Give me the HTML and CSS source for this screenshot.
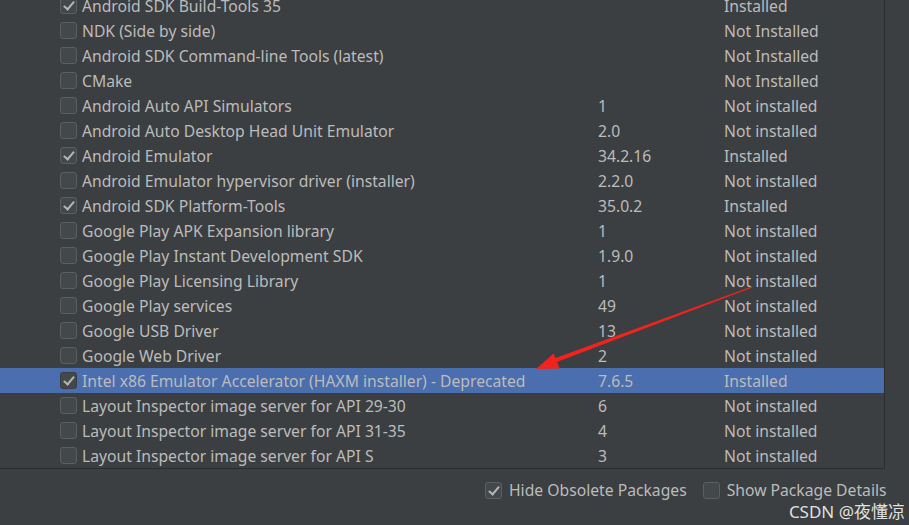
FILE: index.html
```html
<!DOCTYPE html>
<html lang="en">
<head>
    <meta charset="UTF-8">
    <title>SDK Tools</title>
    <link rel="stylesheet" href="styles.css">
</head>
<body>
    <main class="panel">
        <div class="table">
            <div class="row"><span class="name"><span class="box checked"></span>Android SDK Build-Tools 35</span><span class="ver"></span><span class="status">Installed</span></div>
            <div class="row"><span class="name"><span class="box"></span>NDK (Side by side)</span><span class="ver"></span><span class="status">Not Installed</span></div>
            <div class="row"><span class="name"><span class="box"></span>Android SDK Command-line Tools (latest)</span><span class="ver"></span><span class="status">Not Installed</span></div>
            <div class="row"><span class="name"><span class="box"></span>CMake</span><span class="ver"></span><span class="status">Not Installed</span></div>
            <div class="row"><span class="name"><span class="box"></span>Android Auto API Simulators</span><span class="ver">1</span><span class="status">Not installed</span></div>
            <div class="row"><span class="name"><span class="box"></span>Android Auto Desktop Head Unit Emulator</span><span class="ver">2.0</span><span class="status">Not installed</span></div>
            <div class="row"><span class="name"><span class="box checked"></span>Android Emulator</span><span class="ver">34.2.16</span><span class="status">Installed</span></div>
            <div class="row"><span class="name"><span class="box"></span>Android Emulator hypervisor driver (installer)</span><span class="ver">2.2.0</span><span class="status">Not installed</span></div>
            <div class="row"><span class="name"><span class="box checked"></span>Android SDK Platform-Tools</span><span class="ver">35.0.2</span><span class="status">Installed</span></div>
            <div class="row"><span class="name"><span class="box"></span>Google Play APK Expansion library</span><span class="ver">1</span><span class="status">Not installed</span></div>
            <div class="row"><span class="name"><span class="box"></span>Google Play Instant Development SDK</span><span class="ver">1.9.0</span><span class="status">Not installed</span></div>
            <div class="row"><span class="name"><span class="box"></span>Google Play Licensing Library</span><span class="ver">1</span><span class="status">Not installed</span></div>
            <div class="row"><span class="name"><span class="box"></span>Google Play services</span><span class="ver">49</span><span class="status">Not installed</span></div>
            <div class="row"><span class="name"><span class="box"></span>Google USB Driver</span><span class="ver">13</span><span class="status">Not installed</span></div>
            <div class="row"><span class="name"><span class="box"></span>Google Web Driver</span><span class="ver">2</span><span class="status">Not installed</span></div>
            <div class="row selected"><span class="name"><span class="box checked"></span>Intel x86 Emulator Accelerator (HAXM installer) - Deprecated</span><span class="ver">7.6.5</span><span class="status">Installed</span></div>
            <div class="row"><span class="name"><span class="box"></span>Layout Inspector image server for API 29-30</span><span class="ver">6</span><span class="status">Not installed</span></div>
            <div class="row"><span class="name"><span class="box"></span>Layout Inspector image server for API 31-35</span><span class="ver">4</span><span class="status">Not installed</span></div>
            <div class="row"><span class="name"><span class="box"></span>Layout Inspector image server for API S</span><span class="ver">3</span><span class="status">Not installed</span></div>
        </div>

        <div class="options">
            <label class="option"><span class="box checked"></span>Hide Obsolete Packages</label>
            <label class="option"><span class="box"></span>Show Package Details</label>
        </div>
    </main>

    <!-- red annotation arrow drawn over the screenshot -->
    <svg class="arrow" width="909" height="525" viewBox="0 0 909 525">
        <polygon points="752.3,287.6 751.7,286.4 552.8,358.9 554.2,363.1" fill="#f0231e"/>
        <polygon points="536,369 553.6,353.6 559.8,368.6" fill="#f0231e"/>
    </svg>

    <div class="watermark">CSDN @夜懂凉</div>
</body>
</html>
```

FILE: styles.css
```css
*{
    margin: 0;
    padding: 0;
    box-sizing: border-box;
}
body{
    width: 909px;
    height: 525px;
    overflow: hidden;
    background-color: #3c3f41;
    font-family: "Noto Sans", "Open Sans", sans-serif;
    font-size: 15.7px;
    color: #bbbbbb;
}
.panel{
    display: flex;
    flex-direction: column;
}
.table{
    width: 885px;
    margin-top: -7px;
    background-color: #3c3f41;
    border-right: 1px solid #2b2d2e;
    border-bottom: 1px solid #2b2d2e;
}
.row{
    height: 25px;
    display: grid;
    grid-template-columns: 598px 126px 1fr;
    align-items: center;
    white-space: nowrap;
}
.row.selected{
    background-color: #4b6eaf;
}
.name{
    display: flex;
    align-items: center;
    padding-left: 60px;
}
.box{
    width: 17px;
    height: 17px;
    margin-right: 5px;
    border: 1px solid #5c5f61;
    border-radius: 3px;
    background-color: #43494a;
    flex-shrink: 0;
    position: relative;
}
.box.checked::after{
    content: "";
    position: absolute;
    left: 5px;
    top: 1px;
    width: 4px;
    height: 9px;
    border-right: 2px solid #b4b4b4;
    border-bottom: 2px solid #b4b4b4;
    transform: rotate(40deg);
}
.selected .box{
    border-color: #3a3e44;
}
.options{
    display: flex;
    gap: 16px;
    padding-left: 485px;
    padding-top: 11px;
    line-height: 20px;
}
.option{
    display: flex;
    align-items: center;
}
.option .box{
    margin-right: 7px;
}
.arrow{
    position: absolute;
    left: 0;
    top: 0;
    pointer-events: none;
}
.watermark{
    position: absolute;
    right: 4px;
    bottom: 3px;
    font-size: 17px;
    line-height: 20px;
    color: rgba(255, 255, 255, 0.85);
    font-family: "Noto Sans", "Noto Sans CJK SC", sans-serif;
}
```
